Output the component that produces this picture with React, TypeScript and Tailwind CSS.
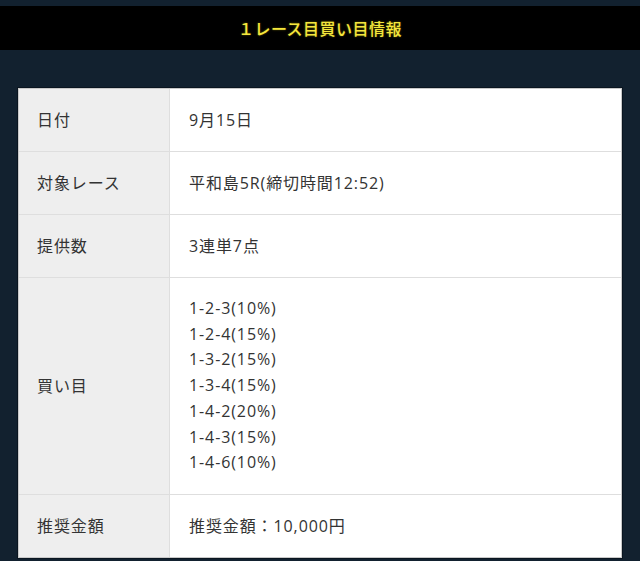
import React from "react";

const ROWS = [
  { label: "日付", value: ["9月15日"] },
  { label: "対象レース", value: ["平和島5R(締切時間12:52)"] },
  { label: "提供数", value: ["3連単7点"] },
  {
    label: "買い目",
    value: [
      "1-2-3(10%)",
      "1-2-4(15%)",
      "1-3-2(15%)",
      "1-3-4(15%)",
      "1-4-2(20%)",
      "1-4-3(15%)",
      "1-4-6(10%)",
    ],
  },
  { label: "推奨金額", value: ["推奨金額：10,000円"] },
];

export default function App() {
  return (
    <div
      className="min-h-[561px] bg-[#12212f] pt-[6px] pb-[4px]"
      style={{ fontFamily: '"Open Sans", "Noto Sans CJK JP", sans-serif' }}
    >
      {/* Title bar */}
      <div className="h-[44px] bg-black flex items-center justify-center">
        <h1 className="text-[16px] font-medium text-[#f4e63e] tracking-[0.5px] [text-shadow:0_0_2px_rgba(120,110,0,0.9)] [font-family:'Noto_Sans_CJK_JP',sans-serif]">
          １レース目買い目情報
        </h1>
      </div>

      {/* Info table */}
      <div className="mx-[18px] mt-[38px] border border-[#c9c9c9] bg-white shadow-[0_0_0_1px_#0a1520]">
        {ROWS.map((row, i) => (
          <div
            key={i}
            className="flex border-b border-[#dedede] last:border-b-0 text-[16px] text-[#333] tracking-[0.9px]"
          >
            <div className="w-[151px] shrink-0 bg-[#eeeeee] border-r border-[#dedede] px-[18px] flex items-center">
              {row.label}
            </div>
            <div
              className={
                row.value.length > 1
                  ? "px-[19px] py-[18px] leading-[25.7px]"
                  : "px-[19px] py-[19px] leading-[24px]"
              }
            >
              {row.value.map((v, j) => (
                <div key={j}>{v}</div>
              ))}
            </div>
          </div>
        ))}
      </div>
    </div>
  );
}
